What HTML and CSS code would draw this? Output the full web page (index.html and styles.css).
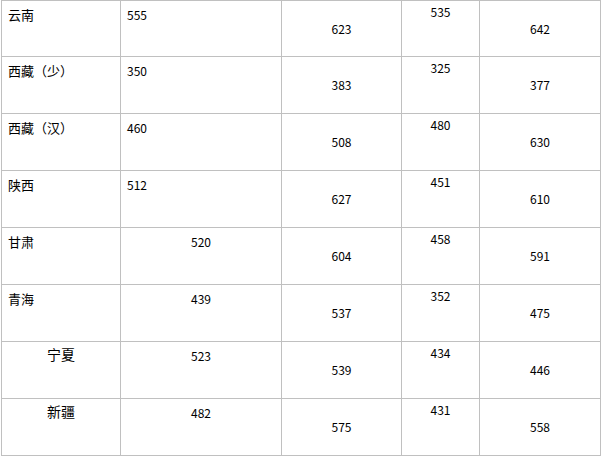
FILE: index.html
```html
<!DOCTYPE html>
<html lang="zh">
<head>
<meta charset="utf-8">
<title>分数线</title>
<link rel="stylesheet" href="styles.css">
</head>
<body>
<div class="grid">
  <div class="c name">云南</div><div class="c left">555</div><div class="c mid">623</div><div class="c top">535</div><div class="c mid">642</div>
  <div class="c name">西藏（少）</div><div class="c left">350</div><div class="c mid">383</div><div class="c top">325</div><div class="c mid">377</div>
  <div class="c name">西藏（汉）</div><div class="c left">460</div><div class="c mid">508</div><div class="c top">480</div><div class="c mid">630</div>
  <div class="c name">陕西</div><div class="c left">512</div><div class="c mid">627</div><div class="c top">451</div><div class="c mid">610</div>
  <div class="c name">甘肃</div><div class="c center">520</div><div class="c mid">604</div><div class="c top">458</div><div class="c mid">591</div>
  <div class="c name">青海</div><div class="c center">439</div><div class="c mid">537</div><div class="c top">352</div><div class="c mid">475</div>
  <div class="c name-c">宁夏</div><div class="c center">523</div><div class="c mid">539</div><div class="c top">434</div><div class="c mid">446</div>
  <div class="c name-c">新疆</div><div class="c center">482</div><div class="c mid">575</div><div class="c top">431</div><div class="c mid">558</div>
</div>
</body>
</html>
```
FILE: styles.css
```css
html, body {
  margin: 0;
  padding: 0;
  background: #ffffff;
}
body {
  font-family: "Noto Sans CJK SC", "Noto Sans", sans-serif;
  font-size: 12px;
  color: #000000;
}
.grid {
  margin-left: 1px;
  width: 598px;
  display: grid;
  grid-template-columns: 118px 160px 119px 77px 120px;
  grid-template-rows: 55px repeat(7, 56px);
  gap: 1px;
  background: #c0c0c0;
  border: 1px solid #c0c0c0;
}
.c {
  background: #ffffff;
  line-height: 18px;
  box-sizing: border-box;
}
.name {
  font-size: 13px;
  padding: 5px 0 0 6px;
}
.name-c {
  background: #ffffff;
  font-size: 14px;
  line-height: 20px;
  padding-top: 2px;
  text-align: center;
}
.left {
  padding: 5px 0 0 6px;
}
.center {
  padding-top: 5px;
  text-align: center;
}
.mid {
  display: flex;
  align-items: center;
  justify-content: center;
}
.top {
  padding-top: 2px;
  text-align: center;
}
```
